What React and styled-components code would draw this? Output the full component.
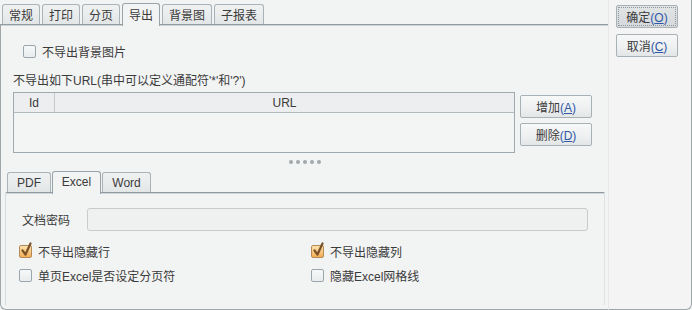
import React from "react";
import styled, { createGlobalStyle, css } from "styled-components";

const GlobalStyle = createGlobalStyle`
  html, body {
    margin: 0;
    padding: 0;
    background: #f2f3f3;
  }
  body {
    font-family: "Liberation Sans", "Noto Sans CJK SC", sans-serif;
    font-size: 12px;
    color: #3b3b3b;
  }
`;

const Window = styled.div`
  display: flex;
  width: 692px;
  height: 310px;
  background: #f2f3f3;
`;

const MainColumn = styled.div`
  width: 608px;
  display: flex;
  flex-direction: column;
`;

const SideColumn = styled.div`
  flex: 1;
  display: flex;
  flex-direction: column;
  align-items: flex-start;
  gap: 6px;
  padding: 5px 0 0 7px;
  background: #f4f4f4;
  border-left: 1px solid #e7e9e9;
  border-right: 1px solid #9fa7ab;
  border-bottom: 1px solid #9fa7ab;
  border-bottom-right-radius: 6px;
`;

const TabStrip = styled.div`
  display: flex;
  align-items: flex-end;
  gap: ${(p) => p.$gap}px;
  height: ${(p) => p.$height}px;
  padding-left: ${(p) => p.$pad}px;
  position: relative;
  z-index: 1;
`;

const Tab = styled.div`
  box-sizing: border-box;
  display: flex;
  align-items: center;
  justify-content: center;
  min-width: ${(p) => p.$minWidth || 0}px;
  padding: 0 6px;
  height: 20px;
  border: 1px solid #aab3b7;
  border-bottom: none;
  border-radius: 3px 3px 0 0;
  background: linear-gradient(#f0f2f2, #e3e6e7);
  color: #3b3b3b;
  ${(p) =>
    p.$active &&
    css`
      height: 23px;
      margin-bottom: -2px;
      padding-bottom: 2px;
      background: #f2f3f3;
      border-color: #9aa4a8;
    `}
`;

const Panel = styled.div`
  flex: 1;
  display: flex;
  flex-direction: column;
  border-top: 1px solid #8f9ba0;
  box-shadow: inset 0 1px 0 #cdd3d6;
  border-left: 1px solid #9fa7ab;
  border-bottom: 1px solid #9fa7ab;
  border-bottom-left-radius: 6px;
`;

const CheckRow = styled.label`
  display: flex;
  align-items: center;
  gap: 6px;
  height: 16px;
  margin-top: 18px;
  padding-left: 22px;
`;

const Box = styled.span`
  position: relative;
  box-sizing: border-box;
  width: 13px;
  height: 13px;
  flex: none;
  border: 1px solid #9ba6ac;
  border-radius: 2px;
  background: linear-gradient(#f6f8f8, #e8ecee);
  ${(p) =>
    p.$checked &&
    css`
      border-color: #b48a58;
      background: linear-gradient(#fde3ad, #f1ae55);
    `}
`;

const Tick = styled.svg`
  position: absolute;
  left: 0;
  top: -4px;
  width: 13px;
  height: 15px;
`;

const Caption = styled.div`
  margin-top: 15px;
  padding-left: 12px;
  line-height: 14px;
`;

const UrlArea = styled.div`
  display: flex;
  gap: 5px;
  margin-top: 4px;
  padding-left: 12px;
`;

const Table = styled.div`
  box-sizing: border-box;
  width: 502px;
  height: 61px;
  border: 1px solid #a0a9ad;
  background: #f3f4f4;
`;

const HeaderRow = styled.div`
  display: grid;
  grid-template-columns: 40px 1fr;
  height: 19px;
  border-bottom: 1px solid #b3babd;
  background: #eceeef;
`;

const HeaderCell = styled.div`
  display: flex;
  align-items: center;
  justify-content: center;
  & + & {
    border-left: 1px solid #c3c9cc;
  }
`;

const ButtonStack = styled.div`
  display: flex;
  flex-direction: column;
  gap: 5px;
  padding-top: 3px;
`;

const Button = styled.button`
  position: relative;
  box-sizing: border-box;
  width: ${(p) => p.$width}px;
  height: 23px;
  padding: 0;
  border: 1px solid #a8b1b5;
  border-radius: 2px;
  background: linear-gradient(#f7f8f8 0%, #eef0f1 55%, #e3e6e7 100%);
  font-family: inherit;
  font-size: 12px;
  color: #3b3b3b;
  ${(p) =>
    p.$default &&
    css`
      background: linear-gradient(#e2e5e6, #d5d9db);
      &::after {
        content: "";
        position: absolute;
        inset: 1px;
        border: 1px dotted #8d979b;
      }
    `}
`;

const Key = styled.span`
  color: #2f58a8;
  & u {
    text-decoration: underline;
  }
`;

const Splitter = styled.div`
  display: flex;
  justify-content: center;
  gap: 3px;
  height: 16px;
  padding-top: 7px;
  box-sizing: border-box;
`;

const Dot = styled.span`
  width: 4px;
  height: 4px;
  border-radius: 50%;
  background: #a2a8ab;
`;

const SubArea = styled.div`
  margin-left: 4px;
  width: 600px;
  display: flex;
  flex-direction: column;
`;

const SubPanel = styled.div`
  box-sizing: border-box;
  height: 113px;
  padding: 15px 16px 0 16px;
  border-top: 1px solid #8f9ba0;
  border-left: 1px solid #d7dcde;
  border-right: 1px solid #dde1e2;
  border-top-left-radius: 2px;
  box-shadow: inset 0 1px 0 #cfd5d8;
`;

const FieldRow = styled.div`
  display: flex;
  align-items: center;
  height: 23px;
`;

const FieldLabel = styled.span`
  width: 65px;
`;

const Input = styled.div`
  flex: 1;
  height: 23px;
  box-sizing: border-box;
  border: 1px solid #c6ccce;
  border-radius: 3px;
  background: #eff1f1;
`;

const OptionGrid = styled.div`
  display: grid;
  grid-template-columns: 292px 1fr;
  grid-auto-rows: 24px;
  margin-top: 8px;
  margin-left: -3px;
`;

const Option = styled.label`
  display: flex;
  align-items: center;
  gap: 6px;
`;

function Check({ checked }) {
  return (
    <Box $checked={checked}>
      {checked && (
        <Tick viewBox="0 0 13 15">
          <path
            d="M2.5 8.5 L5.5 12.5 L10.5 1.5"
            fill="none"
            stroke="#7a5128"
            strokeWidth="2.2"
            strokeLinecap="round"
            strokeLinejoin="round"
          />
        </Tick>
      )}
    </Box>
  );
}

function Mnemonic({ label, letter }) {
  return (
    <>
      {label}
      <Key>
        (<u>{letter}</u>)
      </Key>
    </>
  );
}

const mainTabs = ["常规", "打印", "分页", "导出", "背景图", "子报表"];
const subTabs = ["PDF", "Excel", "Word"];
const options = [
  { text: "不导出隐藏行", checked: true },
  { text: "不导出隐藏列", checked: true },
  { text: "单页Excel是否设定分页符", checked: false },
  { text: "隐藏Excel网格线", checked: false },
];

export default function App() {
  return (
    <>
      <GlobalStyle />
      <Window>
        <MainColumn>
          <TabStrip $height={24} $pad={2} $gap={2}>
            {mainTabs.map((t) => (
              <Tab key={t} $active={t === "导出"}>
                {t}
              </Tab>
            ))}
          </TabStrip>
          <Panel>
            <CheckRow>
              <Check />
              不导出背景图片
            </CheckRow>
            <Caption>不导出如下URL(串中可以定义通配符'*'和'?')</Caption>
            <UrlArea>
              <Table>
                <HeaderRow>
                  <HeaderCell>Id</HeaderCell>
                  <HeaderCell>URL</HeaderCell>
                </HeaderRow>
              </Table>
              <ButtonStack>
                <Button $width={72}>
                  <Mnemonic label="增加" letter="A" />
                </Button>
                <Button $width={72}>
                  <Mnemonic label="删除" letter="D" />
                </Button>
              </ButtonStack>
            </UrlArea>
            <Splitter>
              {[0, 1, 2, 3, 4].map((i) => (
                <Dot key={i} />
              ))}
            </Splitter>
            <SubArea>
              <TabStrip $height={23} $pad={2} $gap={1}>
                {subTabs.map((t) => (
                  <Tab key={t} $minWidth={t === "PDF" ? 44 : 49} $active={t === "Excel"}>
                    {t}
                  </Tab>
                ))}
              </TabStrip>
              <SubPanel>
                <FieldRow>
                  <FieldLabel>文档密码</FieldLabel>
                  <Input />
                </FieldRow>
                <OptionGrid>
                  {options.map((o) => (
                    <Option key={o.text}>
                      <Check checked={o.checked} />
                      {o.text}
                    </Option>
                  ))}
                </OptionGrid>
              </SubPanel>
            </SubArea>
          </Panel>
        </MainColumn>
        <SideColumn>
          <Button $width={62} $default>
            <Mnemonic label="确定" letter="O" />
          </Button>
          <Button $width={62}>
            <Mnemonic label="取消" letter="C" />
          </Button>
        </SideColumn>
      </Window>
    </>
  );
}
